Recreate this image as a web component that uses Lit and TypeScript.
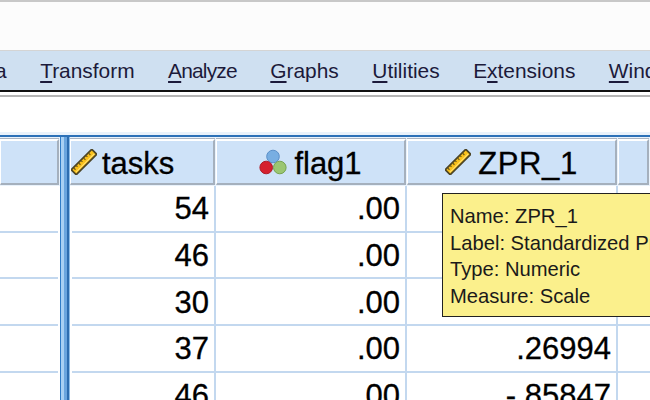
import { LitElement, html, css, svg } from "lit";
import { customElement } from "lit/decorators.js";

const ruler = svg`<svg class="icon" viewBox="0 0 26 26" width="26" height="26">
  <g transform="rotate(-45 13 13)">
    <rect x="-1.500" y="9.500" width="29" height="7" fill="#fbc21c" stroke="#4d4526" stroke-width="1.700"/>
    <path d="M1.500 10v2.500M5 10v1.800M8.500 10v2.500M12 10v1.800M15.500 10v2.500M19 10v1.800M22.500 10v2.500" stroke="#6f5a18" stroke-width="1.300" fill="none"/>
    <path d="M0 14.500h26" stroke="#ffe27a" stroke-width="1" fill="none"/>
  </g>
</svg>`;

const nominal = svg`<svg class="icon" viewBox="0 0 28 26" width="28" height="26">
  <circle cx="14" cy="7.500" r="6.300" fill="#78aee2" stroke="#5b8fc8" stroke-width="1"/>
  <circle cx="20.800" cy="18.500" r="6.300" fill="#9bc672" stroke="#76a350" stroke-width="1"/>
  <circle cx="7.200" cy="18.500" r="6.300" fill="#d5202f" stroke="#ad1c2a" stroke-width="1"/>
</svg>`;

const rows: [string, string, string][] = [
  ["54", ".00", ""],
  ["46", ".00", ""],
  ["30", ".00", ""],
  ["37", ".00", ".26994"],
  ["46", ".00", "-.85847"],
];

@customElement("app-root")
export class AppRoot extends LitElement {
  static styles = css`
    :host {
      display: block;
      width: 650px;
      height: 400px;
      overflow: hidden;
      position: relative;
      background: #fff;
      font-family: "Liberation Sans", Arial, sans-serif;
      color: #000;
    }
    .title {
      height: 48px;
      background: #fcfcfc;
      border-top: 2px solid #c8c8c8;
      border-bottom: 1px solid #d4d4d4;
    }
    .menu {
      height: 41px;
      box-sizing: border-box;
      background: #cfe0f1;
      display: flex;
      align-items: center;
      overflow: hidden;
      white-space: nowrap;
      font-size: 20.900px;
      color: #1c1a3a;
      border-bottom: 2px solid #111;
    }
    .menu-inner {
      display: flex;
      gap: 33.500px;
      margin-left: -37.500px;
      padding-top: 1px;
    }
    .menu u {
      text-underline-offset: 3px;
      text-decoration-thickness: 2px;
    }
    .narrow {
      letter-spacing: -0.800px;
    }
    .rule {
      height: 3px;
      border-bottom: 2px solid #b5b5b5;
      background: #fff;
    }
    .gap {
      height: 38px;
      background: linear-gradient(#fff 0 35px, #e9f2fb 35px);
    }
    .sheet {
      display: flex;
      height: 265px;
    }
    .left {
      width: 60px;
      flex: none;
      overflow: hidden;
    }
    .splitter {
      width: 10px;
      flex: none;
      border-top: 2px solid #2c71b8;
      background: linear-gradient(
        90deg,
        #2f7cc7 0 1.500px,
        #a8d0f3 1.500px 4px,
        #6aa5de 4px 7px,
        #2d6db0 7px 9px,
        #8dbbe6 9px
      );
    }
    .right {
      flex: 1;
      min-width: 0;
      overflow: hidden;
    }
    .head {
      height: 51px;
      box-sizing: border-box;
      background: #e9f2fb;
      border-top: 2px solid #2c71b8;
      display: grid;
      grid-template-columns: 146px 191px 211px 1fr;
      padding-top: 2px;
    }
    .left .head {
      display: block;
      padding-right: 1px;
    }
    .hcell {
      height: 46px;
      box-sizing: border-box;
      background: #cee2f8;
      border-top: 2px solid #fff;
      border-left: 1px solid #fff;
      border-right: 2px solid #a5b0bd;
      border-bottom: 2px solid #a5b0bd;
      box-shadow: 0 -1px 0 #a9b4c2;
      margin-right: 1px;
      display: flex;
      align-items: center;
      justify-content: center;
      gap: 7px;
      font-size: 31px;
      white-space: nowrap;
      -webkit-text-stroke: 0.3px #000;
    }
    .hcell span {
      padding-top: 4px;
    }
    .hcell.start {
      justify-content: flex-start;
      padding-left: 0;
      gap: 5px;
    }
    .wide {
      letter-spacing: 0.600px;
    }
    .left .hcell {
      margin-right: 0;
    }
    .icon {
      flex: none;
    }
    .row {
      height: 46.670px;
      box-sizing: border-box;
      display: grid;
      grid-template-columns: 144px 191px 211px 1fr;
      border-bottom: 2px solid #c3d8ef;
      margin-left: 2px;
    }
    .left .row {
      display: block;
      margin-left: 0;
      margin-right: 2px;
    }
    .cell {
      border-right: 2px solid #c3d8ef;
      display: flex;
      align-items: center;
      justify-content: flex-end;
      padding-right: 5px;
      padding-top: 2px;
      font-size: 31px;
      box-sizing: border-box;
      -webkit-text-stroke: 0.3px #000;
    }
    .cell:last-child {
      border-right: none;
    }
    .tip {
      position: absolute;
      left: 442px;
      top: 193px;
      width: 220px;
      height: 124px;
      box-sizing: border-box;
      background: #fbf08c;
      border: 1.500px solid #222;
      padding: 9px 7px;
      font-size: 20.200px;
      line-height: 26.700px;
      color: #1a1a1a;
      white-space: nowrap;
    }
  `;

  render() {
    return html`
      <div class="title"></div>
      <div class="menu">
        <div class="menu-inner">
          <span><u>D</u>ata</span>
          <span><u>T</u>ransform</span>
          <span class="narrow"><u>A</u>nalyze</span>
          <span><u>G</u>raphs</span>
          <span><u>U</u>tilities</span>
          <span>E<u>x</u>tensions</span>
          <span><u>W</u>indow</span>
        </div>
      </div>
      <div class="rule"></div>
      <div class="gap"></div>
      <div class="sheet">
        <div class="left">
          <div class="head"><div class="hcell"></div></div>
          ${rows.map(() => html`<div class="row"></div>`)}
        </div>
        <div class="splitter"></div>
        <div class="right">
          <div class="head">
            <div class="hcell start">${ruler}<span>tasks</span></div>
            <div class="hcell">${nominal}<span>flag1</span></div>
            <div class="hcell">${ruler}<span class="wide">ZPR_1</span></div>
            <div class="hcell"></div>
          </div>
          ${rows.map(
            (r) => html`<div class="row">
              <div class="cell">${r[0]}</div>
              <div class="cell">${r[1]}</div>
              <div class="cell">${r[2]}</div>
              <div class="cell"></div>
            </div>`
          )}
        </div>
      </div>
      <div class="tip">
        <div>Name: ZPR_1</div>
        <div>Label: Standardized Predicted Value</div>
        <div>Type: Numeric</div>
        <div>Measure: Scale</div>
      </div>
    `;
  }
}
